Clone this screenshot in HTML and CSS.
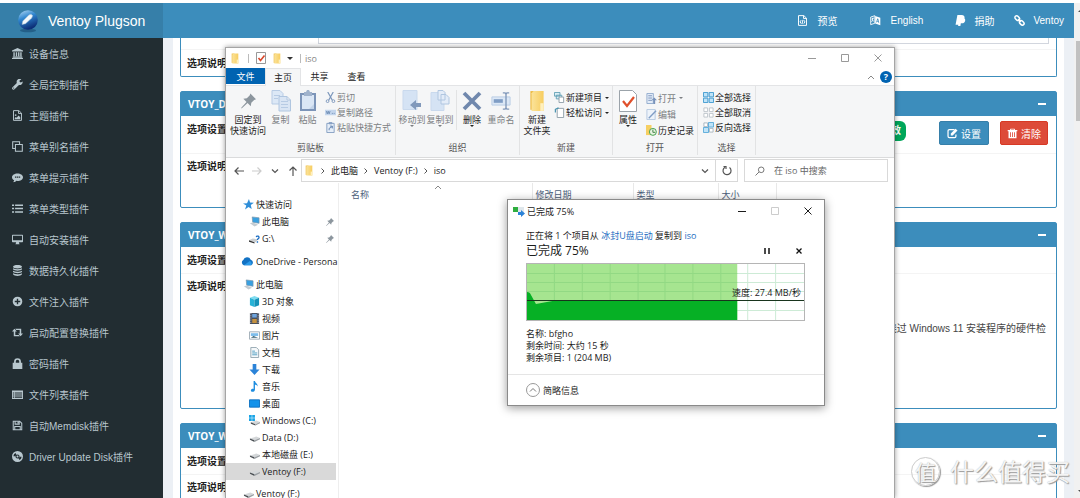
FILE: index.html
```html
<!DOCTYPE html>
<html lang="zh-CN">
<head>
<meta charset="utf-8">
<title>Ventoy Plugson</title>
<link rel="stylesheet" href="styles.css">
</head>
<body>
<svg class="defs" aria-hidden="true">
  <defs>
    <linearGradient id="g-ball" x1="0" y1="0" x2="0.4" y2="1"><stop offset="0" stop-color="#b9dcf5"/><stop offset=".45" stop-color="#2f86d0"/><stop offset="1" stop-color="#0c2f78"/></linearGradient>
    <linearGradient id="g-folder" x1="0" x2="1"><stop offset="0" stop-color="#fbe39a"/><stop offset="1" stop-color="#f7cd60"/></linearGradient>
  </defs>
  <symbol id="i-bank" viewBox="0 0 16 16"><path d="M8 0 0 3.500V5h16V3.500zM2 6h2v6H2zM5.500 6h2v6h-2zM8.800 6h2v6h-2zM12 6h2v6h-2zM1 12.500h14V14H1zM0 14.500h16V16H0z"/></symbol>
  <symbol id="i-wrench" viewBox="0 0 16 16"><path d="M15.500 3.500 12.800 5 11 4V2l2.700-1.600A4.500 4.500 0 0 0 7 5.700L.8 11.900a1.900 1.900 0 0 0 2.900 3l6.400-6.300a4.500 4.500 0 0 0 5.400-5.100zM2.500 14a.8.8 0 1 1 0-1.600.8.8 0 0 1 0 1.600z"/></symbol>
  <symbol id="i-fileimg" viewBox="0 0 16 16"><path fill="none" stroke="currentColor" stroke-width="1.400" d="M2.200.9H10l3.800 3.700v10.500H2.200zM9.500 1v4h4"/><path d="M4 13.500v-2l1.600-1.500 1.200 1.200L9.500 8 12 10.500v3z"/><circle cx="5.300" cy="7.300" r="1.300"/></symbol>
  <symbol id="i-clone" viewBox="0 0 16 16"><path fill="none" stroke="currentColor" stroke-width="1.500" d="M5 5h10v10H5zM11 4.500V1H1v10h3.500"/></symbol>
  <symbol id="i-comment" viewBox="0 0 16 16"><path fill-rule="evenodd" d="M8 2c4.400 0 8 2.400 8 5.500S12.400 13 8 13l-1.500-.1C5 14.500 3 15 1.500 15c1-1 1.500-2 1.600-3C1.200 11 0 9.300 0 7.500 0 4.400 3.600 2 8 2zM4.300 6.400v2h2v-2zm2.800 0v2h2v-2zm2.800 0v2h2v-2z"/></symbol>
  <symbol id="i-list" viewBox="0 0 16 16"><path d="M0 2h3v2.200H0zM4.500 2H16v2.200H4.500zM0 7h3v2.200H0zM4.500 7H16v2.200H4.500zM0 12h3v2.200H0zM4.500 12H16v2.200H4.500z"/></symbol>
  <symbol id="i-desktop" viewBox="0 0 16 16"><path fill-rule="evenodd" d="M1 1h14q1 0 1 1v9q0 1-1 1h-5l.5 2H11v1H5v-1h.500l.5-2H1q-1 0-1-1V2q0-1 1-1zm.4 1.400v6.600h13.200V2.400z"/></symbol>
  <symbol id="i-db" viewBox="0 0 16 16"><path d="M1.500 2.500C1.500 1 4.400 0 8 0s6.500 1 6.500 2.500S11.600 5 8 5 1.500 4 1.500 2.500zM1.500 4.700C5 6.600 11 6.600 14.500 4.700v1.500C12.500 9 3.500 9 1.500 6.200zM1.500 8.300c3.500 2 9.500 2 13 0v1.500c-2 2.800-11 2.800-13 0zM1.500 12c3.500 2 9.500 2 13 0v1.500c-2 3.300-11 3.300-13 0z"/></symbol>
  <symbol id="i-plus" viewBox="0 0 16 16"><path fill-rule="evenodd" d="M8 1a7 7 0 1 1 0 14A7 7 0 0 1 8 1zM7 4v3H4v2h3v3h2V9h3V7H9V4z"/></symbol>
  <symbol id="i-retweet" viewBox="0 0 16 16"><path d="m3.500 2.500 3.500 4H4.800v5h5l1.700 2H2.600v-7H0zM12.500 13.500 9 9.500h2.200v-5h-5l-1.700-2h8.900v7H16z"/></symbol>
  <symbol id="i-lock" viewBox="0 0 16 16"><path fill-rule="evenodd" d="M1 7h2V5.200a5 5 0 0 1 10 0V7h2v9H1zm4.500 0h5V5a2.500 2.500 0 0 0-5 0z"/></symbol>
  <symbol id="i-table" viewBox="0 0 16 16"><path fill-rule="evenodd" d="M0 2h16v12.500H0zm1.200 3v1.500h2V5zm3 0v1.500h10.500V5zm-3 3v1.500h2V8zm3 0v1.500h10.500V8zm-3 3v1.700h2V11zm3 0v1.700h10.500V11z"/></symbol>
  <symbol id="i-save" viewBox="0 0 16 16"><path fill="none" stroke="currentColor" stroke-width="1.500" d="M1.800 1.800h9.400l3 3v9.400H1.800zM4.500 2v4h6V2M4 14V9.500h8V14"/><path d="M8 2h2v3H8z"/></symbol>
  <symbol id="i-disc" viewBox="0 0 16 16"><path fill-rule="evenodd" d="M8 0a8 8 0 1 1 0 16A8 8 0 0 1 8 0zm0 5a3 3 0 1 0 0 6 3 3 0 0 0 0-6zM2 7.500l2.500.3L6.400 5 5 2.800A6 6 0 0 0 2 7.500zM14 8.500l-2.500-.3L9.600 11l1.400 2.200a6 6 0 0 0 3-4.700z"/><circle cx="8" cy="8" r="1.400"/></symbol>
  <symbol id="i-code" viewBox="0 0 16 16"><path fill="none" stroke="currentColor" stroke-width="1.400" d="M2.200.9H10l3.800 3.700v10.500H2.200zM9.500 1v4h4M6 7.500 4.500 10 6 12.500M10 7.500l1.500 2.500-1.500 2.500M8.600 7l-1.200 6"/></symbol>
  <symbol id="i-lang" viewBox="0 0 16 16"><path fill="none" stroke="currentColor" stroke-width="1.300" d="M1 3l6-2v11l-6 2zM2.500 5.500l3-1M4 4v1.500c0 2-1 3.500-1.700 4.500M3 6.500l2.500 3"/><path fill-rule="evenodd" d="M7.500 1.500 15 4v11l-7.500-2.500zM10.500 5 9 10.500l1 .3.400-1.200 1.700.5.400 1.500 1 .4L12 5.500zm.7 1.700.6 2.200-1.100-.4z"/></symbol>
  <symbol id="i-paypal" viewBox="0 0 16 16"><path d="M3.500 0h6C13 0 14.500 2 13.800 5c2 1 1.500 7-3.800 7H8.500L7.800 16H4.500l.3-2H.8z"/></symbol>
  <symbol id="i-link" viewBox="0 0 16 16"><g fill="none" stroke="currentColor" stroke-width="2.200"><rect x="1" y="2" width="7.500" height="5" rx="2.500" transform="rotate(45 4.700 4.500)"/><rect x="7.500" y="8.800" width="7.500" height="5" rx="2.500" transform="rotate(45 11.200 11.300)"/><path d="m6 6 4 4"/></g></symbol>
  <symbol id="i-edit" viewBox="0 0 16 16"><path fill="none" stroke="currentColor" stroke-width="1.800" d="M11 2.500H3.500q-2 0-2 2v7.500q0 2 2 2H11q2 0 2-2V9.500"/><path d="M5.500 8 12.500 1l2.800 2.800-7 7H5.500z"/></symbol>
  <symbol id="i-trash" viewBox="0 0 16 16"><path fill-rule="evenodd" d="M5 1h6l.8 2H15v1.700h-1.200V15H2.200V4.700H1V3h3.200zM6 2.200 5.700 3h4.600L10 2.200zM4.500 6v7h1.200V6zm2.900 0v7h1.200V6zm2.900 0v7h1.200V6z"/></symbol>
  <symbol id="i-folder" viewBox="0 0 16 20"><path fill="#edb93f" d="M2 1h5v17H2z"/><path fill="url(#g-folder)" d="M5 1h9v18H3V3z"/><path fill="#fff0bd" d="M11 12h3v7h-3z"/></symbol>
  <symbol id="i-pin" viewBox="0 0 16 16"><path fill="#8c969e" d="m10 0 6 6-2 .8-3 3-.6 3.700L7 10.100 1.200 15.500 0 16l.5-1.200L5.900 9 2.500 5.600 6.200 5l3-3z"/></symbol>
  <symbol id="i-copy" viewBox="0 0 20 22"><path fill="#dce8f6" stroke="#b7cbe4" d="M1 .5h8l3 3V14H1z"/><path fill="#d9e5f4" stroke="#b0c6e0" d="M8 6.500h8l3.500 3.500v11H8zM16 6.500V10h3.500"/><path stroke="#b7cbe4" d="M10 11.500h7M10 14.500h7M10 17.500h7M3 5.500h6M3 8.500h4"/></symbol>
  <symbol id="i-paste" viewBox="0 0 16 22"><path fill="#7c94b8" d="M0 3h16v18H0z"/><path fill="#dae6f5" d="M2 5h12v14H2z"/><path fill="#9fb2cc" d="M4 2h2l1-2h2l1 2h2v4H4z"/><path fill="#c3d4e9" d="m9 19 5-5v5z"/></symbol>
  <symbol id="i-cut" viewBox="0 0 12 12"><path fill="none" stroke="#7b96bb" stroke-width="1.300" d="m3 0 5 9M9 0 4 9"/><g fill="none" stroke="#7b96bb"><circle cx="2.800" cy="10" r="1.500"/><circle cx="9.200" cy="10" r="1.500"/></g></symbol>
  <symbol id="i-path" viewBox="0 0 12 12"><path fill="#c3d5ec" d="M0 3h12v6H0z"/><path fill="none" stroke="#6f8db5" d="m1.500 4.500 1 3 1-3 1 3 1-3M7.500 7h1M9.500 7h1"/></symbol>
  <symbol id="i-shortcut" viewBox="0 0 12 12"><path fill="#e6eef8" stroke="#829dc1" d="M2 1.500h8v10H2zM4.500.5h3v1.500h-3z"/><path fill="none" stroke="#5d7fae" d="M4.500 9V7L8 5M5.500 4.500H8V7"/></symbol>
  <symbol id="i-move" viewBox="0 0 20 22"><path fill="#d5e3f4" stroke="#c9d9ed" d="M1 .5h14v19H1z"/><path fill="#8199bb" d="m8 15 6-5v3h5v4h-5v3z"/></symbol>
  <symbol id="i-copyto" viewBox="0 0 20 22"><path fill="#d5e3f4" stroke="#c9d9ed" d="M1 2.500h13v18H1z"/><path fill="#e3ecf8" stroke="#b0c6e0" d="M8 .5h5l2 2V10H8zM11 4.500h5l3 3V14h-8z"/></symbol>
  <symbol id="i-delete" viewBox="0 0 20 20"><path stroke="#7088ad" stroke-width="3.800" d="m2 2 16 16M18 2 2 18"/></symbol>
  <symbol id="i-rename" viewBox="0 0 22 20"><path fill="#dce8f6" stroke="#b7cbe4" d="M1 5.500h20v9H1z"/><path fill="#7f9dc5" d="M3 8h10v4H3z"/><path fill="none" stroke="#8199bb" stroke-width="1.500" d="M13 1h2.500l1 1.500 1-1.500H20M16.500 2v16M13 19h2.500l1-1.500 1 1.500H20"/></symbol>
  <symbol id="i-newitem" viewBox="0 0 12 12"><path fill="#dbeef5" stroke="#61a0b5" d="M.5.500h6v4h-6zM2.500 3.500h6v4h-6z"/><path fill="#fff" stroke="#8d9da6" d="M5.500 5.500h5v6h-5z"/></symbol>
  <symbol id="i-easy" viewBox="0 0 12 12"><path fill="#fff" stroke="#8d9da6" d="M3.500 1.500h7v10h-7z"/><path fill="none" stroke="#4894b0" stroke-width="1.300" d="M5 1 1.500 2.500V6"/></symbol>
  <symbol id="i-prop" viewBox="0 0 18 22"><path fill="#fff" stroke="#9ba3aa" d="M.5.500h13l4 4v17H.5z"/><path fill="none" stroke="#e0502b" stroke-width="2.200" d="m4 11 4 5 7-9"/></symbol>
  <symbol id="i-open" viewBox="0 0 12 12"><path fill="#e3ecf8" stroke="#8ea9cc" d="M1 .5h7v11H1z"/><path stroke="#7892ba" d="M2.500 3h4M2.500 5.500h4M2.500 8h4"/><path fill="#7892ba" d="m9 5 3 3h-2v4H8V8H6z"/></symbol>
  <symbol id="i-editf" viewBox="0 0 12 12"><path fill="#edf3fa" stroke="#b4c7df" d="M1 .5h9v11H1z"/><path stroke="#7f9dc5" stroke-width="1.500" d="m3 10 8-8"/></symbol>
  <symbol id="i-history" viewBox="0 0 12 12"><path fill="#f6cf62" d="M0 0h6v11H0z"/><circle cx="7.500" cy="7.500" r="3.800" fill="#e8f3e2" stroke="#3b9b45"/><path fill="none" stroke="#3b7c40" d="M7.500 5v3h2.500"/></symbol>
  <symbol id="i-selall" viewBox="0 0 12 12"><path fill="#bfe3f8" stroke="#3d98cf" d="M.5.500h4.800v4.800H.5zM6.700.500h4.800v4.800H6.700zM.5 6.700h4.800v4.800H.5zM6.700 6.700h4.800v4.800H6.700z"/></symbol>
  <symbol id="i-selnone" viewBox="0 0 12 12"><path fill="#fff" stroke="#bcc3c9" d="M1 1h4v4H1zM7 1h4v4H7zM1 7h4v4H1zM7 7h4v4H7z"/></symbol>
  <symbol id="i-selinv" viewBox="0 0 12 12"><path fill="#fff" stroke="#a7b5c0" d="M1 1h4v4H1zM7 7h4v4H7z"/><path fill="#bfe3f8" stroke="#57a8d9" d="M6 .5h5.500v5H6zM.5 6H6v5.500H.5z"/></symbol>
  <symbol id="i-star" viewBox="0 0 12 12"><path fill="#2f8ed8" d="m6.500 0 1.200 3.800 4.200.2-3.400 2.600 1 4.400L6 8.600 2.200 11.500l1.400-4.300L0 4.800l4.400-.3z"/></symbol>
  <symbol id="i-pc" viewBox="0 0 12 12"><path fill="#3aa0e0" stroke="#7a93a6" stroke-width=".7" d="m3.500 1 7.500 1v6L4 6.800z"/><path fill="#c4ccd2" d="m1 8 3-1 6 2.500L6 11.500z"/></symbol>
  <symbol id="i-unknown" viewBox="0 0 12 12"><path fill="#c9cdd0" d="m0 8 4-2 6 1-3 3z"/><path fill="#333" d="M0 8l6 2v1.500L0 9.500z"/><path fill="none" stroke="#1d6fc4" stroke-width="1.500" d="M8 4.500c.5-2 3.500-1 2.800.8-.5 1-1.600 1-1.600 2.200M9.200 9v1.500"/></symbol>
  <symbol id="i-cloud" viewBox="0 0 14 10"><path fill="#1272c4" d="M3 9a3 3 0 0 1-.5-5.500 4.300 4.300 0 0 1 8-.5A3.200 3.200 0 0 1 11 9z"/><path fill="#2c9ae8" d="M3 9 9.500 4.500A3.400 3.400 0 0 1 11 9z"/></symbol>
  <symbol id="i-3d" viewBox="0 0 12 12"><path fill="#7edcf0" d="m6 0 5 2-5 2-5-2z"/><path fill="#28b2d6" d="m1 2 5 2v8L1 10z"/><path fill="#1592b8" d="m11 2-5 2v8l5-2z"/></symbol>
  <symbol id="i-video" viewBox="0 0 12 12"><path fill="#454d5b" d="M1 0h10v12H1z"/><path fill="#6da3dd" d="M3.500 1h5v4h-5z"/><path fill="#c59241" d="M3.500 6.500h5v4.500h-5z"/><path stroke="#ccd" stroke-dasharray="1 1" d="M2 0v12M10 0v12"/></symbol>
  <symbol id="i-pic" viewBox="0 0 12 12"><path fill="#fff" stroke="#9aa7b2" d="M.5 2h11v8H.5z"/><path fill="#7cbceb" d="M2 3.500h8v3H2z"/><path fill="#345e70" d="m2 8.500 3-2 5 2z"/></symbol>
  <symbol id="i-doc" viewBox="0 0 12 12"><path fill="#f5f8fa" stroke="#90a4ae" d="M2 .5h6l2.500 2.500v8.500H2z"/><path fill="none" stroke="#4d9cc2" d="M3.500 4.500h3M3.500 6.500h5.500M3.500 8.500h5.500"/></symbol>
  <symbol id="i-down" viewBox="0 0 12 12"><path fill="#2b83d8" d="M4 0h4v6h3.500L6 12 .5 6H4z"/></symbol>
  <symbol id="i-music" viewBox="0 0 12 12"><path fill="#1d8de0" d="M5 0h1.500c0 2 3.500 3 3 6-.5-1.500-1.500-2-3-2v5.500C6 12.500 2 12.500 2 10.300 2 8.600 4 8.200 5 8.600z"/></symbol>
  <symbol id="i-desk" viewBox="0 0 12 12"><path fill="#1392ea" stroke="#0b6fc0" d="M.5 2h11v8H.5z"/></symbol>
  <symbol id="i-drive" viewBox="0 0 12 12"><path fill="#d4d7d9" d="m1 7 7-2 4 1.500L6 9z"/><path fill="#4a4f53" d="m1 7 5 2v2L1 8.500z"/><path fill="#9a9fa3" d="m6 9 6-2.500V8L6 11z"/></symbol>
  <symbol id="i-windrive" viewBox="0 0 12 12"><path fill="#18a4e6" d="M0 0h3v3H0zM3.500 0h3v3h-3zM0 3.500h3v3H0zM3.500 3.500h3v3h-3z"/><path fill="#d4d7d9" d="m2 8 6-2 4 1.500L7 10z"/><path fill="#4a4f53" d="m2 8 5 2v1.500l-5-2z"/><path fill="#9a9fa3" d="m7 10 5-2.500V9l-5 2.500z"/></symbol>
  <symbol id="i-check" viewBox="0 0 12 12"><path fill="#fff" stroke="#999" d="M1.500.500h9v11h-9z"/><path fill="none" stroke="#d9472b" stroke-width="1.600" d="m3.500 6 2 2.500 4-5"/></symbol>
  <symbol id="i-min" viewBox="0 0 12 12"><path stroke="currentColor" d="M2 6.500h8"/></symbol>
  <symbol id="i-max" viewBox="0 0 12 12"><path fill="none" stroke="currentColor" d="M2.500 2.500h7v7h-7z"/></symbol>
  <symbol id="i-x" viewBox="0 0 12 12"><path stroke="currentColor" d="m2.500 2.500 7 7m0-7-7 7"/></symbol>
  <symbol id="i-up" viewBox="0 0 12 12"><path fill="none" stroke="currentColor" d="m3 8 3-3 3 3"/></symbol>
  <symbol id="i-chev" viewBox="0 0 12 12"><path fill="none" stroke="currentColor" stroke-width="1.200" d="m3 4.500 3 3 3-3"/></symbol>
  <symbol id="i-right" viewBox="0 0 12 12"><path fill="none" stroke="currentColor" d="m4.500 3.500 2.500 2.500-2.500 2.500"/></symbol>
  <symbol id="i-arrow" viewBox="0 0 12 12"><path fill="none" stroke="currentColor" stroke-width="1.200" d="M11 6H2m3.500-3.500L2 6l3.500 3.500"/></symbol>
  <symbol id="i-refresh" viewBox="0 0 12 12"><path fill="none" stroke="currentColor" stroke-width="1.200" d="M8.500 2.500a4 4 0 1 1-4.500-.3M2.500 1.500H5V4"/></symbol>
  <symbol id="i-search" viewBox="0 0 12 12"><path fill="none" stroke="currentColor" d="M1.500 10.500 5 7"/><circle cx="7.200" cy="4.800" r="2.800" fill="none" stroke="currentColor"/></symbol>
</svg>

<header class="top">
  <a class="brand" href="#">
    <svg class="ball" viewBox="0 0 22 24"><ellipse cx="11" cy="21.500" rx="8" ry="1.800" fill="#245f88"/><circle cx="11" cy="11" r="9.800" fill="url(#g-ball)"/><path fill="#f3f8fb" stroke="#9bb8d0" stroke-width=".5" d="m5 15.500.8-3.500 6-6q2.500-1.500 3.500 .3 .6 1.500-.8 2.900l-6 5.500z"/></svg>
    Ventoy Plugson
  </a>
  <nav class="topnav">
    <a href="#"><svg><use href="#i-code"/></svg>预览</a>
    <a href="#"><svg><use href="#i-lang"/></svg>English</a>
    <span class="pair">
      <a href="#"><svg><use href="#i-paypal"/></svg>捐助</a>
      <a href="#"><svg><use href="#i-link"/></svg>Ventoy</a>
    </span>
  </nav>
  <div class="track-top"><span class="tri"></span></div>
</header>

<div class="body">
  <nav class="side">
    <a href="#"><svg><use href="#i-bank"/></svg>设备信息</a>
    <a href="#"><svg><use href="#i-wrench"/></svg>全局控制插件</a>
    <a href="#"><svg><use href="#i-fileimg"/></svg>主题插件</a>
    <a href="#"><svg><use href="#i-clone"/></svg>菜单别名插件</a>
    <a href="#"><svg><use href="#i-comment"/></svg>菜单提示插件</a>
    <a href="#"><svg><use href="#i-list"/></svg>菜单类型插件</a>
    <a href="#"><svg><use href="#i-desktop"/></svg>自动安装插件</a>
    <a href="#"><svg><use href="#i-db"/></svg>数据持久化插件</a>
    <a href="#"><svg><use href="#i-plus"/></svg>文件注入插件</a>
    <a href="#"><svg><use href="#i-retweet"/></svg>启动配置替换插件</a>
    <a href="#"><svg><use href="#i-lock"/></svg>密码插件</a>
    <a href="#"><svg><use href="#i-table"/></svg>文件列表插件</a>
    <a href="#"><svg><use href="#i-save"/></svg>自动Memdisk插件</a>
    <a href="#"><svg><use href="#i-disc"/></svg>Driver Update Disk插件</a>
  </nav>
  <main class="content">
    <div class="sheet">
      <section class="card first">
        <div class="field-end"></div>
        <div class="row desc"><b>选项说明</b></div>
      </section>
      <section class="card second">
        <h2>VTOY_DEFAULT<span class="dash"></span></h2>
        <div class="row tall"><b>选项设置</b>
          <div class="acts">
            <span class="pill">有效</span>
            <button class="btn set"><svg><use href="#i-edit"/></svg>设置</button>
            <button class="btn clear"><svg><use href="#i-trash"/></svg>清除</button>
          </div>
        </div>
        <div class="row"><b>选项说明</b></div>
      </section>
      <section class="card third">
        <h2>VTOY_WIN11<span class="dash"></span></h2>
        <div class="row"><b>选项设置</b></div>
        <div class="row"><b>选项说明</b></div>
        <p>绕过 Windows 11 安装程序的硬件检</p>
      </section>
      <section class="card fourth">
        <h2>VTOY_WIN11<span class="dash"></span></h2>
        <div class="row"><b>选项设置</b></div>
        <div class="row"><b>选项说明</b></div>
      </section>
    </div>
  </main>
  <div class="track"><span class="thumb"></span><span class="tri down"></span></div>
</div>

<section class="explorer">
  <div class="titlebar">
    <svg class="fold"><use href="#i-folder"/></svg><i class="bar"></i>
    <svg><use href="#i-check"/></svg><svg class="fold"><use href="#i-folder"/></svg><span class="caret"></span><i class="bar"></i>
    <span class="name">iso</span>
    <div class="controls">
      <button aria-label="最小化"><svg><use href="#i-min"/></svg></button>
      <button aria-label="最大化"><svg><use href="#i-max"/></svg></button>
      <button aria-label="关闭"><svg><use href="#i-x"/></svg></button>
    </div>
  </div>
  <div class="tabs">
    <button class="file">文件</button><button class="on">主页</button><button>共享</button><button>查看</button>
    <div class="help"><svg><use href="#i-up"/></svg><button class="q">?</button></div>
  </div>
  <div class="ribbon">
    <div class="group g1">
      <div class="tools">
        <button class="big"><svg class="pin"><use href="#i-pin"/></svg>固定到<br>快速访问</button>
        <button class="big off"><svg><use href="#i-copy"/></svg>复制</button>
        <button class="big off"><svg><use href="#i-paste"/></svg>粘贴</button>
        <div class="small off">
          <button><svg><use href="#i-cut"/></svg>剪切</button>
          <button><svg><use href="#i-path"/></svg>复制路径</button>
          <button><svg><use href="#i-shortcut"/></svg>粘贴快捷方式</button>
        </div>
      </div>
      <div class="cap">剪贴板</div>
    </div>
    <div class="group g2">
      <div class="tools">
        <button class="big off"><svg><use href="#i-move"/></svg>移动到<span class="caret"></span></button>
        <button class="big off"><svg><use href="#i-copyto"/></svg>复制到<span class="caret"></span></button>
        <i class="sep"></i>
        <button class="big"><svg><use href="#i-delete"/></svg>删除<span class="caret"></span></button>
        <button class="big off"><svg><use href="#i-rename"/></svg>重命名</button>
      </div>
      <div class="cap">组织</div>
    </div>
    <div class="group g3">
      <div class="tools">
        <button class="big"><svg><use href="#i-folder"/></svg>新建<br>文件夹</button>
        <div class="small">
          <button><svg><use href="#i-newitem"/></svg>新建项目<span class="caret"></span></button>
          <button><svg><use href="#i-easy"/></svg>轻松访问<span class="caret"></span></button>
        </div>
      </div>
      <div class="cap">新建</div>
    </div>
    <div class="group g4">
      <div class="tools">
        <button class="big"><svg><use href="#i-prop"/></svg>属性<span class="caret"></span></button>
        <div class="small loose">
          <button class="off"><svg><use href="#i-open"/></svg>打开<span class="caret"></span></button>
          <button class="off"><svg><use href="#i-editf"/></svg>编辑</button>
          <button><svg><use href="#i-history"/></svg>历史记录</button>
        </div>
      </div>
      <div class="cap">打开</div>
    </div>
    <div class="group g5">
      <div class="tools">
        <div class="small">
          <button><svg><use href="#i-selall"/></svg>全部选择</button>
          <button><svg><use href="#i-selnone"/></svg>全部取消</button>
          <button><svg><use href="#i-selinv"/></svg>反向选择</button>
        </div>
      </div>
      <div class="cap">选择</div>
    </div>
  </div>
  <div class="address">
    <div class="go">
      <svg><use href="#i-arrow"/></svg><svg class="dim"><use href="#i-arrow" transform="rotate(180 6 6)"/></svg><svg><use href="#i-chev"/></svg><svg><use href="#i-arrow" transform="rotate(90 6 6)"/></svg>
    </div>
    <div class="crumbs">
      <svg class="fold"><use href="#i-folder"/></svg><svg><use href="#i-right"/></svg><span>此电脑</span><svg><use href="#i-right"/></svg><span>Ventoy (F:)</span><svg><use href="#i-right"/></svg><span>iso</span>
      <svg class="drop"><use href="#i-chev"/></svg>
    </div>
    <button class="reload" aria-label="刷新"><svg><use href="#i-refresh"/></svg></button>
    <label class="search"><svg><use href="#i-search"/></svg><input type="text" placeholder="在 iso 中搜索" aria-label="搜索"></label>
  </div>
  <div class="panes">
    <nav class="tree">
      <div>
        <a href="#"><svg><use href="#i-star"/></svg>快速访问</a>
        <a class="sub" href="#"><svg><use href="#i-pc"/></svg>此电脑<svg class="tack"><use href="#i-pin"/></svg></a>
        <a class="sub" href="#"><svg><use href="#i-unknown"/></svg>G:\<svg class="tack"><use href="#i-pin"/></svg></a>
      </div>
      <div><a href="#"><svg class="wide"><use href="#i-cloud"/></svg>OneDrive - Persona</a></div>
      <div>
        <a href="#"><svg><use href="#i-pc"/></svg>此电脑</a>
        <a class="sub" href="#"><svg><use href="#i-3d"/></svg>3D 对象</a>
        <a class="sub" href="#"><svg><use href="#i-video"/></svg>视频</a>
        <a class="sub" href="#"><svg><use href="#i-pic"/></svg>图片</a>
        <a class="sub" href="#"><svg><use href="#i-doc"/></svg>文档</a>
        <a class="sub" href="#"><svg><use href="#i-down"/></svg>下载</a>
        <a class="sub" href="#"><svg><use href="#i-music"/></svg>音乐</a>
        <a class="sub" href="#"><svg><use href="#i-desk"/></svg>桌面</a>
        <a class="sub" href="#"><svg><use href="#i-windrive"/></svg>Windows (C:)</a>
        <a class="sub" href="#"><svg><use href="#i-drive"/></svg>Data (D:)</a>
        <a class="sub" href="#"><svg><use href="#i-drive"/></svg>本地磁盘 (E:)</a>
        <a class="sub sel" href="#"><svg><use href="#i-drive"/></svg>Ventoy (F:)</a>
      </div>
      <div><a class="last" href="#"><svg><use href="#i-drive"/></svg>Ventoy (F:)</a></div>
    </nav>
    <div class="files">
      <svg class="sort"><use href="#i-up"/></svg>
      <table class="cols"><thead><tr><th class="c1">名称</th><th class="c2">修改日期</th><th class="c3">类型</th><th class="c4">大小</th><th class="c5"></th></tr></thead></table>
    </div>
  </div>
</section>

<section class="dialog">
  <div class="dtitle">
    <svg viewBox="0 0 12 12"><path fill="#2fae3f" d="M0 2h5v5H0z"/><path fill="#dfe7ec" d="M5 2h6v5H5z"/><path fill="#2b83d8" d="M5 7h3V5l4 3.500L8 12v-2H5z"/></svg>
    <span>已完成 75%</span>
    <div class="controls">
      <button aria-label="最小化"><svg><use href="#i-min"/></svg></button>
      <button class="dim" aria-label="最大化" disabled><svg><use href="#i-max"/></svg></button>
      <button aria-label="关闭"><svg><use href="#i-x"/></svg></button>
    </div>
  </div>
  <div class="dbody">
    <div>正在将 1 个项目从 <a href="#">冰封U盘启动</a> 复制到 <a href="#">iso</a></div>
    <div class="status"><strong>已完成 75%</strong>
      <button class="pause" aria-label="暂停"><svg viewBox="0 0 12 12"><path stroke="#111" stroke-width="1.500" d="M4 3v6M8 3v6"/></svg></button>
      <button aria-label="取消"><svg viewBox="0 0 12 12"><path stroke="#111" stroke-width="1.300" d="m3.500 3.500 5 5m0-5-5 5"/></svg></button>
    </div>
    <div class="chart">
      <svg viewBox="0 0 278 56" preserveAspectRatio="none">
        <path stroke="#cdebd6" d="M27.500 0v56M55.500 0v56M83.500 0v56M111.500 0v56M138.500 0v56M166.500 0v56M194.500 0v56M221.500 0v56M249.500 0v56M0 9.500h278M0 18.500h278M0 27.500h278M0 46.500h278"/>
        <path fill="#a6e590" d="M0 0h211v56H0z"/>
        <path stroke="#92d984" d="M27.500 0v56M55.500 0v56M83.500 0v56M111.500 0v56M138.500 0v56M166.500 0v56M194.500 0v56M0 9.500h211M0 18.500h211M0 27.500h211"/>
        <path fill="#06b025" d="M0 28q3 0 4 3l5 9 22-4h180v20H0z"/>
        <path stroke="#17331c" d="M0 36.500h278"/>
      </svg>
      <span class="speed">速度: 27.4 MB/秒</span>
    </div>
    <div class="info">名称: bfgho<br>剩余时间: 大约 15 秒<br>剩余项目: 1 (204 MB)</div>
  </div>
  <button class="less"><svg viewBox="0 0 14 14"><circle cx="7" cy="7" r="6.500" fill="none" stroke="#999"/><path fill="none" stroke="#777" d="m4 8.500 3-3 3 3"/></svg>简略信息</button>
</section>

<div class="mark"><span class="seal">值</span>什么值得买</div>
</body>
</html>
```
FILE: styles.css
```css
* { box-sizing: border-box; }
body { margin: 0; height: 100vh; overflow: hidden; position: relative; display: flex; flex-direction: column; background: #fff; font: 10px "Liberation Sans", "Noto Sans CJK SC", sans-serif; color: #333; }
a { color: inherit; text-decoration: none; }
button { font: inherit; color: inherit; border: 0; background: none; padding: 0; }
svg { flex: none; fill: currentColor; width: 12px; height: 12px; }
.defs { position: absolute; width: 0; height: 0; }

.top { flex: none; display: flex; height: 35px; margin-top: 3px; color: #fff; background: #3c8dbc; }
.brand { width: 163px; display: flex; align-items: center; gap: 9px; padding-left: 17px; background: #367fa9; font-size: 14px; }
.ball { width: 22px; height: 24px; }
.topnav { flex: 1; display: flex; justify-content: flex-end; align-items: center; gap: 32px; padding-right: 10px; }
.topnav a { display: flex; align-items: center; gap: 10px; }
.topnav svg { width: 11px; height: 11px; }
.pair { display: flex; gap: 20px; }
.pair a { gap: 8px; }
.track-top, .track { width: 6px; background: #f1f1f1; position: relative; }
.tri { position: absolute; left: 4px; top: 5px; border: 4px solid transparent; border-top-width: 0; border-bottom-color: #505050; }
.tri.down { top: auto; bottom: 4px; border-width: 4px 4px 0; border-color: #505050 transparent; }
.thumb { display: block; height: 80px; margin: 3px 0 0 2px; background: #c1c1c1; }

.body { flex: 1; min-height: 0; display: flex; }
.side { width: 163px; background: #222d32; color: #b8c7ce; }
.side a { display: flex; align-items: center; height: 31px; padding-left: 12px; gap: 6px; }
.side svg { width: 11px; height: 11px; }
.content { flex: 1; overflow: hidden; background: #ecf0f5; padding: 0 10px; }
.sheet { background: #fff; padding: 0 7px; min-height: 100%; display: flex; flex-direction: column; gap: 14px; }
.card { flex: none; border: 1px solid #3c8dbc; border-radius: 2px; }
.card h2 { margin: 0; height: 24px; padding: 0 10px 0 7px; display: flex; align-items: center; justify-content: space-between; background: #3c8dbc; color: #fff; font: bold 10px "Open Sans", sans-serif; }
.dash { width: 8px; height: 2px; background: #fff; }
.row { height: 26px; padding: 0 8px 2px 6px; display: flex; align-items: center; justify-content: space-between; color: #222; }
.row + .row { border-top: 1px solid #f4f4f4; }
.row.tall { height: 37px; align-items: flex-start; padding-top: 5px; }
.first { border-top: 0; height: 39px; border-radius: 0 0 2px 2px; }
.field-end { height: 6px; margin: 0 7px 0 137px; border: 1px solid #d2d6de; border-top: 0; }
.desc { margin-top: 5px; border-top: 1px solid #f4f4f4; padding-bottom: 0; }
.second { height: 117px; }
.third { height: 187px; }
.fourth { height: 117px; }
.third p { margin: 21px 10px 0; text-align: right; color: #444; }
.acts { display: flex; align-items: flex-start; }
.pill { height: 20px; padding: 0 5px; margin-right: 33px; border-radius: 6px; background: #00a65a; color: #fff; line-height: 20px; font-weight: bold; }
.btn { height: 24px; padding: 0 6px; display: flex; align-items: center; gap: 3px; border-radius: 2px; color: #fff; }
.btn svg { width: 11px; height: 11px; }
.set { background: #3c8dbc; border: 1px solid #367fa9; margin-right: 11px; padding: 0 7px; }
.clear { background: #dd4b39; border: 1px solid #d73925; }

.explorer { position: absolute; left: 225px; right: 185px; top: 47px; bottom: 0; display: flex; flex-direction: column; background: #fff; border: 1px solid #a5a5a5; border-bottom: 0; box-shadow: 0 0 5px rgba(0,0,0,.4); font: 9px "Open Sans", "Noto Sans CJK SC", sans-serif; color: #222; }
.titlebar { flex: none; height: 20px; display: flex; align-items: center; gap: 4px; padding-left: 3px; color: #888; }
.fold { width: 12px; height: 11px; }
.bar { width: 1px; height: 9px; margin: 0 3px; background: #bbb; }
.titlebar .bar + svg { margin-left: -1px; }
.caret { flex: none; border: 2px solid transparent; border-top-color: currentColor; border-bottom: 0; }
.titlebar .caret { border-width: 3px 3px 0; color: #333; }
.titlebar .caret + .bar { margin-right: 0; }
.controls { margin-left: auto; display: flex; }
.controls button { width: 33px; display: flex; justify-content: center; align-items: center; }
.explorer .controls { color: #999; }
.tabs { flex: none; height: 18px; display: flex; border-bottom: 1px solid #e3e4e6; }
.tabs button { width: 37px; }
.tabs .file { width: 39px; height: 16px; background: #0063b1; color: #fff; }
.tabs .on { background: #f5f6f7; border: 1px solid #e3e4e6; border-bottom: 0; height: 18px; width: 36px; }
.help { margin-left: auto; display: flex; align-items: center; gap: 3px; padding-right: 2px; color: #888; }
.help .q { width: 12px; height: 12px; border-radius: 50%; background: #0063b1; color: #fff; font-weight: bold; line-height: 12px; }
.ribbon { flex: none; height: 72px; display: flex; background: #f5f6f7; border-bottom: 1px solid #dadbdc; }
.group { display: flex; flex-direction: column; justify-content: space-between; border-right: 1px solid #e2e3e4; margin-bottom: 2px; }
.g1 { width: 170px; } .g2 { width: 124px; } .g3 { width: 93px; } .g4 { width: 85px; } .g5 { width: 58px; }
.tools { display: flex; padding: 4px 0 0 3px; }
.cap { text-align: center; line-height: 14px; color: #555; }
.big { display: flex; flex-direction: column; align-items: center; line-height: 11px; white-space: nowrap; }
.big svg { width: 20px; height: 22px; margin-bottom: 2px; }
.big .pin { width: 15px; }
.off { color: #7c7f83; }
.g1 .big { width: 27px; }
.g1 .big:first-child { width: 38px; }
.g2 .tools, .g3 .tools { padding-left: 2px; }
.g2 .big { width: 28px; }
.g2 .sep + .big { width: 30px; }
.sep { width: 1px; height: 40px; background: #e2e3e4; margin-left: 2px; }
.g3 .big { width: 30px; }
.g4 .big { width: 24px; margin-right: 4px; }
.small { display: flex; flex-direction: column; padding-left: 2px; }
.g1 .small { padding-left: 4px; }
.small button { display: flex; align-items: center; height: 15px; gap: 1px; white-space: nowrap; }
.small svg { width: 11px; height: 11px; }
.small .caret { margin-left: 2px; }
.loose button { height: 16px; }

.address { flex: none; height: 25px; display: flex; align-items: center; padding-right: 6px; }
.go { width: 75px; display: flex; justify-content: space-between; padding: 0 2px 0 7px; color: #555; }
.go .dim, .dim { color: #ccc; }
.crumbs { flex: 1; height: 23px; display: flex; align-items: center; gap: 2px; padding-left: 1px; border: 1px solid #d9d9d9; }
.crumbs svg { color: #555; }
.drop { margin: 0 4px 0 auto; }
.reload { width: 22px; height: 23px; display: flex; align-items: center; justify-content: center; border: 1px solid #d9d9d9; border-left: 0; color: #555; }
.search { width: 144px; height: 23px; margin-left: 6px; display: flex; align-items: center; gap: 8px; padding-left: 9px; border: 1px solid #d9d9d9; color: #777; }
.search input { flex: 1; min-width: 0; border: 0; padding: 0; font: inherit; outline: 0; }
.search input::placeholder { color: #666; }
.panes { flex: 1; min-height: 0; display: flex; overflow: hidden; }
.tree { width: 113px; padding: 13px 2px 0 0; border-right: 1px solid #eee; display: flex; flex-direction: column; gap: 6px; white-space: nowrap; }
.tree a { display: flex; align-items: center; height: 17px; padding-left: 17px; gap: 2px; }
.tree a.sub { padding-left: 23px; }
.tree a.last { height: 14px; }
.tree svg { width: 11px; height: 11px; }
.tree .wide { width: 13px; margin-left: -2px; }
.tree .tack { width: 8px; height: 8px; margin: 0 2px 0 auto; }
.tree .sel { background: #d9d9d9; }
.files { flex: 1; position: relative; }
.sort { position: absolute; left: 93px; top: -2px; color: #888; }
.cols { width: 100%; table-layout: fixed; border-collapse: collapse; color: #4c607a; }
.cols th { height: 23px; padding: 0 0 0 3px; text-align: left; font-weight: normal; border-right: 1px solid #e8e8e8; }
.cols .c1 { width: 193px; padding-left: 12px; } .c2 { width: 101px; } .c3 { width: 85px; } .c4 { width: 58px; }
.cols .c5 { border: 0; }

.dialog { position: absolute; left: 507px; top: 199px; width: 318px; background: #fff; border: 1px solid #8a8a8a; box-shadow: 0 2px 9px rgba(0,0,0,.4); font: 9px "Open Sans", "Noto Sans CJK SC", sans-serif; color: #1c1c1c; }
.dtitle { height: 22px; display: flex; align-items: center; gap: 2px; padding: 0 0 0 5px; }
.dbody { padding: 7px 19px 0 18px; line-height: 14px; border-bottom: 1px solid #e5e5e5; height: 153px; }
.dbody a { color: #1b6dc1; }
.status { display: flex; align-items: center; height: 16px; }
.status strong { font-weight: normal; font-size: 12px; margin-right: auto; }
.status button { display: flex; }
.pause { margin-right: 20px; }
.chart { height: 58px; margin-top: 4px; border: 1px solid #b5b5b5; position: relative; }
.chart svg { display: block; width: 100%; height: 100%; }
.speed { position: absolute; right: 3px; top: 22px; }
.info { line-height: 12px; margin-top: 7px; }
.less { height: 30px; padding-left: 18px; display: flex; align-items: center; gap: 3px; }
.less svg { width: 14px; height: 14px; }

.mark { position: absolute; right: 10px; bottom: 11px; display: flex; align-items: center; gap: 10px; font: 24px "Noto Sans CJK SC", sans-serif; line-height: 32px; color: rgba(255,255,255,.9); text-shadow: 1px 1px 1px #999, 0 0 1px #aaa; }
.seal { width: 29px; height: 29px; border: 1px solid #ccc; border-radius: 50%; font-size: 21px; line-height: 26px; text-align: center; box-shadow: 1px 1px 1px #999; }
```
